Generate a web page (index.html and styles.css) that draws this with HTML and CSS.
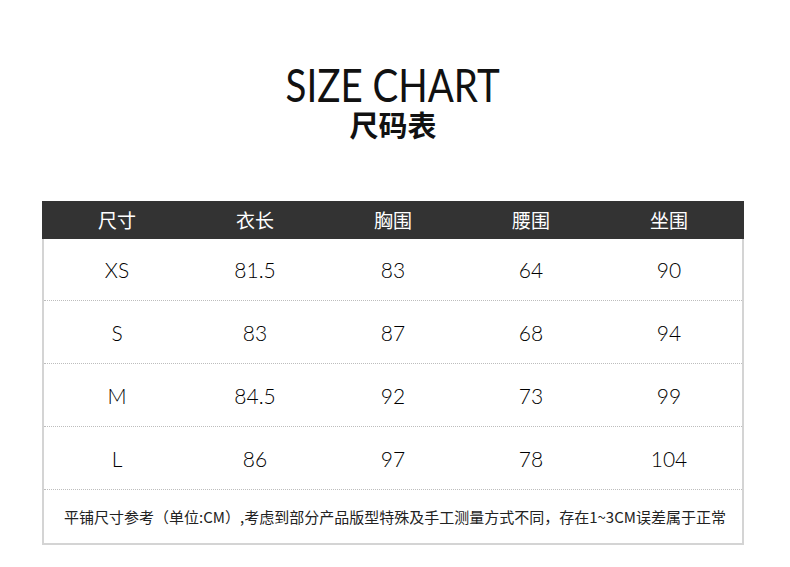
FILE: index.html
```html
<!DOCTYPE html>
<html lang="zh">
<head>
<meta charset="utf-8">
<link rel="stylesheet" href="styles.css">
</head>
<body>
<div class="page">
  <header class="title">
    <h1 class="title-en"><span class="title-en-text">SIZE CHART</span></h1>
    <h2 class="title-zh">尺码表</h2>
  </header>
  <div class="chart">
    <div class="row head">
      <div class="cell">尺寸</div>
      <div class="cell">衣长</div>
      <div class="cell">胸围</div>
      <div class="cell">腰围</div>
      <div class="cell">坐围</div>
    </div>
    <div class="row">
      <div class="cell">XS</div>
      <div class="cell">81.5</div>
      <div class="cell">83</div>
      <div class="cell">64</div>
      <div class="cell">90</div>
    </div>
    <div class="row">
      <div class="cell">S</div>
      <div class="cell">83</div>
      <div class="cell">87</div>
      <div class="cell">68</div>
      <div class="cell">94</div>
    </div>
    <div class="row">
      <div class="cell">M</div>
      <div class="cell">84.5</div>
      <div class="cell">92</div>
      <div class="cell">73</div>
      <div class="cell">99</div>
    </div>
    <div class="row">
      <div class="cell">L</div>
      <div class="cell">86</div>
      <div class="cell">97</div>
      <div class="cell">78</div>
      <div class="cell">104</div>
    </div>
    <div class="note">平铺尺寸参考（单位:CM）,考虑到部分产品版型特殊及手工测量方式不同，存在1~3CM误差属于正常</div>
  </div>
</div>
</body>
</html>
```

FILE: styles.css
```css
* { box-sizing: border-box; }
html, body {
  margin: 0;
  padding: 0;
  background: #fff;
}
.page {
  width: 790px;
  height: 567px;
  padding-top: 61px;
  font-family: "Noto Sans CJK SC", sans-serif;
  color: #222;
}
.title {
  text-align: center;
  margin-left: -4px;
}
.title-en {
  margin: 0;
  font-family: "Lato", "Noto Sans CJK SC", sans-serif;
  font-weight: 400;
  font-size: 47px;
  line-height: 46px;
  color: #111;
}
.title-en-text {
  display: inline-block;
  transform: scaleX(0.82);
  transform-origin: center;
}
.title-zh {
  margin: 0;
  font-family: "Noto Sans CJK SC", sans-serif;
  font-weight: 700;
  font-size: 29px;
  line-height: 34px;
  color: #111;
}
.chart {
  margin: 60px 0 0 42px;
  width: 702px;
  border: 2px solid #d4d4d4;
  border-top: none;
}
.row {
  display: grid;
  grid-template-columns: repeat(5, 1fr);
  padding: 0 4px;
  height: 63px;
  align-items: center;
  border-bottom: 1px dotted #bdbdbd;
  font-family: "Lato", "Noto Sans CJK SC", sans-serif;
  font-weight: 300;
  font-size: 21px;
  color: #000;
}
.row.head {
  height: 38px;
  margin: 0 -2px;
  padding: 0 6px 2px;
  background: #333;
  color: #fff;
  border-bottom: none;
  font-family: "Noto Sans CJK SC", sans-serif;
  font-weight: 400;
  font-size: 19px;
}
.row.head + .row {
  height: 62px;
}
.cell {
  text-align: center;
}
.note {
  height: 53px;
  display: flex;
  align-items: center;
  justify-content: center;
  font-size: 15px;
  color: #222;
  white-space: nowrap;
  padding-left: 4px;
}
```
